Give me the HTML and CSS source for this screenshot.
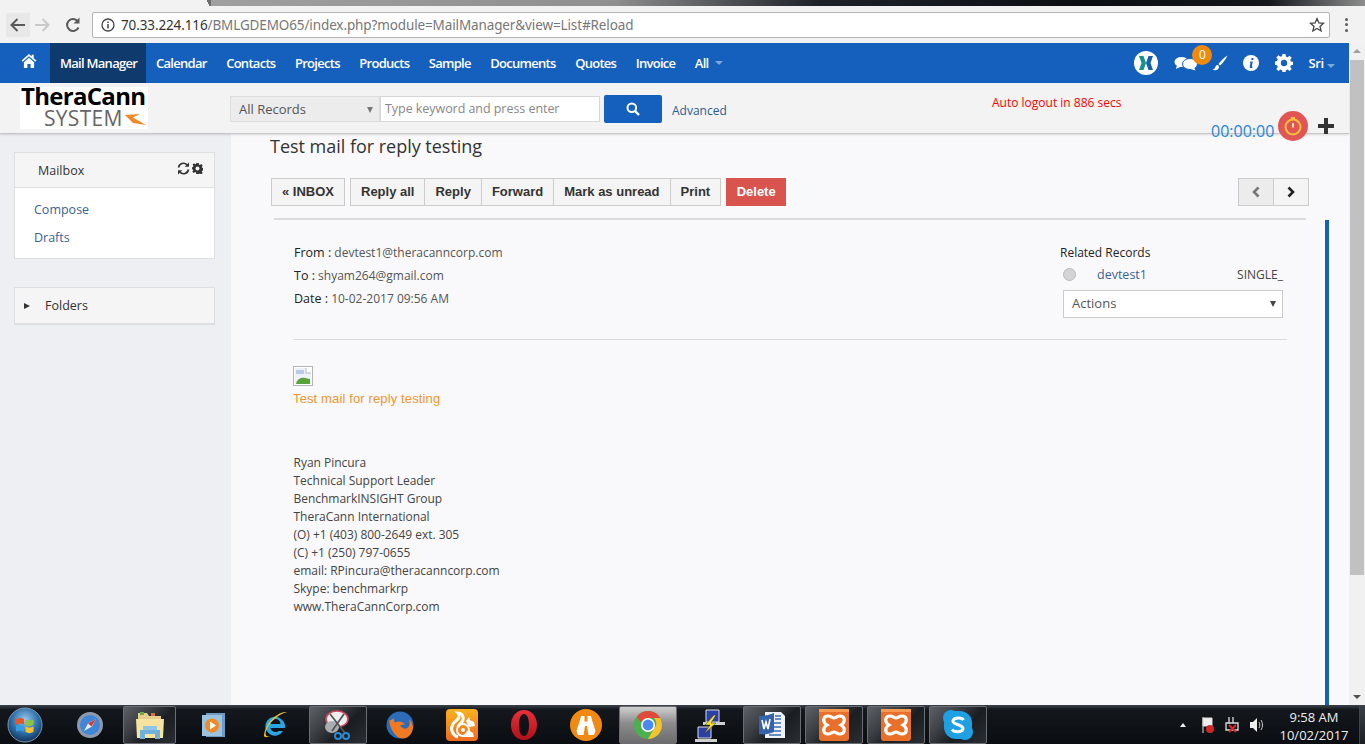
FILE: index.html
```html
<!DOCTYPE html>
<html lang="en">
<head>
<meta charset="utf-8">
<title>Mail Manager</title>
<link rel="stylesheet" href="styles.css">
</head>
<body>
<div class="screen">
  <div class="tabstrip"><div class="tab"></div><div class="tab-slant"></div></div>
  <div class="toolbar">
    <span class="tb-btn tb-back"><svg width="18" height="18" viewBox="0 0 18 18"><path d="M16 9H3M8.500 3 2.500 9l6 6" fill="none" stroke="#5a5a5a" stroke-width="2"/></svg></span>
    <span class="tb-btn"><svg width="18" height="18" viewBox="0 0 18 18"><path d="M2 9h13M9.500 3l6 6-6 6" fill="none" stroke="#c9c9c9" stroke-width="2"/></svg></span>
    <span class="tb-btn"><svg width="18" height="18" viewBox="0 0 18 18"><path d="M14.500 11.500A6 6 0 1 1 14 5.500" fill="none" stroke="#5a5a5a" stroke-width="2"/><path d="M15.500 1.500v6h-6z" fill="#5a5a5a"/></svg></span>
    <div class="omnibox">
      <svg class="omni-info" width="14" height="14" viewBox="0 0 14 14"><circle cx="7" cy="7" r="6" fill="none" stroke="#444" stroke-width="1.300"/><path d="M7 6v4.500M7 3.400v1.500" stroke="#444" stroke-width="1.500"/></svg>
      <span class="omni-host">70.33.224.116</span><span class="omni-path">/BMLGDEMO65/index.php?module=MailManager&amp;view=List#Reload</span>
      <svg class="omni-star" width="16" height="16" viewBox="0 0 16 16"><path d="m8 1.600 1.900 4.300 4.600.4-3.500 3.100 1.100 4.600L8 11.500 3.900 14 5 9.400 1.500 6.300l4.600-.4z" fill="none" stroke="#444" stroke-width="1.300"/></svg>
    </div>
    <span class="kebab"><i></i><i></i><i></i></span>
  </div>

  <div class="viewport">
    <div class="page">
      <nav class="nav">
        <a class="nav-home"><svg width="16" height="16" viewBox="0 0 16 16"><path d="M8 1 .6 7.600l1.100 1.200L8 3.300l6.300 5.500 1.100-1.200-2.700-2.400V1.800h-2v1.800z" fill="#fff"/><path d="M8 4.700 2.900 9.200V15h3.500v-4h3.200v4h3.500V9.200z" fill="#fff"/></svg></a>
        <a class="nav-item active">Mail Manager</a>
        <a class="nav-item">Calendar</a>
        <a class="nav-item">Contacts</a>
        <a class="nav-item">Projects</a>
        <a class="nav-item">Products</a>
        <a class="nav-item">Sample</a>
        <a class="nav-item">Documents</a>
        <a class="nav-item">Quotes</a>
        <a class="nav-item">Invoice</a>
        <a class="nav-item">All <span class="caret"></span></a>
        <div class="nav-right">
          <svg class="ni-x" width="24" height="24" viewBox="0 0 24 24"><circle cx="12" cy="12" r="12" fill="#fff"/><path d="M5 5h4.500L12 12l-2.500 7H5l2.500-7z" fill="#12948c"/><path d="M19 5h-4.500L12 12l2.500 7H19l-2.500-7z" fill="#155fb5"/></svg>
          <span class="ni-chat">
            <svg width="24" height="16" viewBox="0 0 24 16"><ellipse cx="7.500" cy="7" rx="7" ry="5" fill="#fff"/><path d="m3 10-1 4 5-2.500z" fill="#fff"/><ellipse cx="16" cy="9" rx="7.500" ry="5.500" fill="#fff" stroke="#1560bd"/><path d="m20 12.500 1.500 3-5-1.500z" fill="#fff"/></svg>
            <b class="badge">0</b>
          </span>
          <svg class="ni-brush" width="16" height="16" viewBox="0 0 16 16"><path d="M15.500 .5C12 2.500 8.500 6 6.500 9l1.500 1.500C10.500 8.500 14 4 15.500.5z" fill="#fff"/><path d="M5.500 10C3.500 10 3.500 12 3 13c-.3.800-1.500 1.300-2.500 1.300 2 1.500 6 1.200 6.500-2 .1-.8-.5-2.300-1.500-2.300z" fill="#fff"/></svg>
          <svg class="ni-info" width="16" height="16" viewBox="0 0 16 16"><circle cx="8" cy="8" r="8" fill="#fff"/><path d="M8.600 3h2l-.4 2h-2zM7.500 6.500h2.300L8.800 11.500c0 .4.500.3 1 0l-.2.900c-1.400.8-3.100.8-2.900-.7l.8-4.300-.9-.1z" fill="#1560bd"/></svg>
          <svg class="ni-gear" width="18" height="18" viewBox="0 0 18 18"><path d="M7.500 0h3l.4 2.500 1.600.7 2.100-1.500 2.100 2.100-1.500 2.100.7 1.600 2.500.4v3l-2.500.4-.7 1.600 1.500 2.100-2.100 2.100-2.100-1.500-1.600.7-.4 2.500h-3l-.4-2.500-1.600-.7-2.100 1.500-2.100-2.100 1.500-2.100-.7-1.600L-.4 10.500v-3l2.500-.4.700-1.600-1.500-2.100 2.100-2.100 2.100 1.500 1.600-.7z" fill="#fff"/><circle cx="9" cy="9" r="3.200" fill="#1560bd"/></svg>
          <span class="ni-user">Sri <span class="caret"></span></span>
        </div>
      </nav>

      <header class="subhead">
        <div class="logo">
          <span class="logo-top">TheraCann</span>
          <span class="logo-bottom">SYSTEM<svg width="23" height="12" viewBox="0 0 23 12"><path d="M2 1 17 0 10 3.500 23 11 10 9z" fill="#f08a24"/></svg></span>
        </div>
        <div class="search">
          <div class="search-select">All Records<span class="arrow-down"></span></div>
          <div class="search-input">Type keyword and press enter</div>
          <button class="search-btn"><svg width="14" height="14" viewBox="0 0 14 14"><circle cx="5.800" cy="5.800" r="4.300" fill="none" stroke="#fff" stroke-width="2"/><path d="m9 9 4 4" stroke="#fff" stroke-width="2.400"/></svg></button>
          <a class="advanced">Advanced</a>
        </div>
        <div class="autologout">Auto logout in 886 secs</div>
        <div class="timer">
          <span class="timer-text">00:00:00</span>
          <span class="timer-circle"><svg width="18" height="20" viewBox="0 0 18 20"><circle cx="9" cy="11" r="7.500" fill="none" stroke="#f6c03c" stroke-width="2"/><path d="M7 1h4v2H7z" fill="#f6c03c"/><path d="M9 7v4.500" stroke="#fbe3a0" stroke-width="2"/></svg></span>
          <svg class="timer-plus" width="18" height="18" viewBox="0 0 18 18"><path d="M7 1h4v6h6v4h-6v6H7v-6H1V7h6z" fill="#333"/></svg>
        </div>
      </header>

      <div class="content">
        <aside class="sidebar">
          <section class="panel">
            <div class="panel-head">Mailbox
              <span class="panel-tools">
                <svg width="13" height="13" viewBox="0 0 13 13"><path d="M1.500 5.500A5 5 0 0 1 10 2.800M11.500 7.500A5 5 0 0 1 3 10.200" fill="none" stroke="#333" stroke-width="1.700"/><path d="M12 .5v4.300H7.700zM1 12.500V8.200h4.300z" fill="#333"/></svg>
                <svg width="11" height="11" viewBox="0 0 18 18"><path d="M7 0h4l.4 2.500 1.600.7 2.100-1.500 2.400 2.400-1.500 2.100.7 1.600 2.300.4v4l-2.300.4-.7 1.600 1.500 2.100-2.400 2.400-2.100-1.500-1.600.7L11 18H7l-.4-2.500-1.600-.7-2.100 1.500-2.400-2.400 1.500-2.100-.7-1.600L-1 11V7l2.700-.4.700-1.600-1.500-2.100L3.300.5l2.100 1.500 1.600-.7z" fill="#333"/><circle cx="9" cy="9" r="3.200" fill="#f5f5f5"/></svg>
              </span>
            </div>
            <div class="panel-body">
              <a class="side-link">Compose</a>
              <a class="side-link">Drafts</a>
            </div>
          </section>
          <section class="panel panel-folders">
            <span class="tri-right"></span>Folders
          </section>
        </aside>

        <main class="main">
          <h1 class="mail-title">Test mail for reply testing</h1>
          <div class="actions">
            <button class="btn btn-inbox">« INBOX</button>
            <div class="btn-group">
              <button class="btn">Reply all</button><button class="btn">Reply</button><button class="btn">Forward</button><button class="btn">Mark as unread</button><button class="btn">Print</button>
            </div>
            <button class="btn btn-danger">Delete</button>
            <div class="btn-group pager">
              <button class="btn btn-page btn-disabled"><svg width="10" height="12" viewBox="0 0 10 12"><path d="M7.500 1.500 3 6l4.500 4.500" fill="none" stroke="#777" stroke-width="2.600"/></svg></button><button class="btn btn-page"><svg width="10" height="12" viewBox="0 0 10 12"><path d="M2.500 1.500 7 6l-4.500 4.500" fill="none" stroke="#222" stroke-width="2.600"/></svg></button>
            </div>
          </div>
          <div class="rule-top"></div>
          <div class="mail-wrap">
            <div class="mail">
              <div class="mail-head">
                <div class="meta">
                  <p><b>From :</b> devtest1@theracanncorp.com</p>
                  <p><b>To :</b> shyam264@gmail.com</p>
                  <p><b>Date :</b> 10-02-2017 09:56 AM</p>
                </div>
                <div class="related">
                  <div class="related-title">Related Records</div>
                  <div class="related-row"><span class="radio"></span><a class="related-name">devtest1</a><span class="related-type">SINGLE_</span></div>
                  <div class="related-select">Actions<span class="arrow-down dark"></span></div>
                </div>
              </div>
              <div class="mail-rule"></div>
              <div class="broken"><svg width="18" height="18" viewBox="0 0 18 18"><path d="M1 1h11l5 5v11H1z" fill="#eef2f8"/><path d="M12 1v5h5" fill="#fff" stroke="#bbb"/><path d="M2 17c1-5 5-7 9-6l5 1v5z" fill="#5aa23a"/><path d="M2 3h8v4H2z" fill="#b9cbe6"/></svg></div>
              <p class="mail-orange">Test mail for reply testing</p>
              <div class="signature">
                <div>Ryan Pincura</div>
                <div>Technical Support Leader</div>
                <div>BenchmarkINSIGHT Group</div>
                <div>TheraCann International</div>
                <div>(O) +1 (403) 800-2649 ext. 305</div>
                <div>(C) +1 (250) 797-0655</div>
                <div>email: RPincura@theracanncorp.com</div>
                <div>Skype: benchmarkrp</div>
                <div>www.TheraCannCorp.com</div>
              </div>
            </div>
            <div class="blue-bar"></div>
          </div>
        </main>
      </div>
    </div>
    <div class="scrollbar">
      <span class="sb-up"></span>
      <span class="sb-thumb"></span>
      <span class="sb-down"></span>
    </div>
  </div>

  <footer class="taskbar">
    <span class="tk-start"><svg width="36" height="36" viewBox="0 0 36 36"><defs><radialGradient id="orb" cx="50%" cy="35%" r="65%"><stop offset="0" stop-color="#9cc8ea"/><stop offset=".6" stop-color="#2c6ea8"/><stop offset="1" stop-color="#0f3358"/></radialGradient></defs><circle cx="18" cy="18" r="17" fill="url(#orb)" stroke="#7e98b0"/><path d="M9 12c3-1.500 5-1.500 8 0v5.500c-3-1.500-5-1.500-8 0z" fill="#e8552c"/><path d="M18.500 12.500c3 1.500 5 1.500 8 0V18c-3 1.500-5 1.500-8 0z" fill="#8cc43f"/><path d="M9 19c3-1.500 5-1.500 8 0v5.500c-3-1.500-5-1.500-8 0z" fill="#35a0e0"/><path d="M18.500 19.500c3 1.500 5 1.500 8 0V25c-3 1.500-5 1.500-8 0z" fill="#f6c030"/></svg></span>
    <span class="tk-item"><svg width="28" height="28" viewBox="0 0 28 28"><circle cx="14" cy="14" r="13" fill="#8e9aab"/><circle cx="14" cy="14" r="10" fill="#3f86d8"/><path d="m20 8-8 4.500L8 20l8-4.500z" fill="#eee"/><path d="m20 8-8 4.500 3.500 3z" fill="#d83a30"/></svg></span>
    <span class="tk-item tk-active tk-explorer"><svg width="32" height="30" viewBox="0 0 32 30"><path d="M4 3h9l2 3h12v5H4z" fill="#e6cf8c"/><path d="M6 2h4v3H6z" fill="#6fa84a"/><path d="M17 3h4v3h-4z" fill="#d6703c"/><path d="M2 9h28l-1 19H3z" fill="#f6e3a0"/><path d="M6 20h20v9h-5v-5H11v5H6z" fill="#6eb2dc"/><path d="M9 16h14v4H9z" fill="#8fc6e6"/></svg></span>
    <span class="tk-item"><svg width="26" height="28" viewBox="0 0 26 28"><path d="M5 2h19v24H5z" fill="#6f9cc4"/><path d="M1 4h20v21H1z" fill="#9dc2de"/><circle cx="11" cy="14.500" r="7" fill="#f08a24"/><path d="m9 10.500 6 4-6 4z" fill="#fff"/></svg></span>
    <span class="tk-item"><svg width="30" height="30" viewBox="0 0 30 30"><path d="M20 9a9.500 9.500 0 1 0 2 12h-4.500a5 5 0 0 1-8-3H24c.500-4-1-7-4-9zM9.500 14a5 5 0 0 1 10 0z" fill="#2aa6e2"/><path d="M26 2c-8-1-22 10-23 24 1 2 4 1 6 0C5 27 4 25 5 21 8 12 18 4 26 2z" fill="#f2c22e"/></svg></span>
    <span class="tk-item tk-active"><svg width="30" height="30" viewBox="0 0 30 30"><ellipse cx="14" cy="9" rx="11" ry="8" fill="#eee" stroke="#c84a5a" stroke-width="1.600"/><ellipse cx="9" cy="17" rx="7" ry="6" fill="#a9adb2"/><path d="m7 4 15 19M21 4 9 21" stroke="#555" stroke-width="1.800"/><circle cx="23" cy="26" r="3" fill="none" stroke="#2e8ad4" stroke-width="2"/><circle cx="15" cy="26" r="3" fill="none" stroke="#2e8ad4" stroke-width="2"/></svg></span>
    <span class="tk-item"><svg width="30" height="30" viewBox="0 0 30 30"><circle cx="15" cy="15" r="13.500" fill="#2d6cb8"/><path d="M4 9c1 10 6 19 14 19.500 6 0 10-6 10-12-1-5-3-6-4-7 2 5-1 9-3 9-3 1-5-2-6-3 2-1 5-1 5-1-2-3-6-4-10-2-1-1-1-2-1-4-3 1-4 3-5 1z" fill="#f07a22"/></svg></span>
    <span class="tk-item"><svg width="32" height="32" viewBox="0 0 32 32"><defs><linearGradient id="uc" x1="0" y1="0" x2="0" y2="1"><stop offset="0" stop-color="#f9b21e"/><stop offset="1" stop-color="#ee6a20"/></linearGradient></defs><rect width="32" height="32" rx="4" fill="url(#uc)"/><path d="M12 28C6 26 4 20 7 15c2-3 5-4 6-7 .5-2 0-3-1-4 4 0 6 3 5 7-1 3-4 4-5 7" fill="none" stroke="#fff" stroke-width="3"/><circle cx="17" cy="21" r="6" fill="none" stroke="#fff" stroke-width="2"/><circle cx="17" cy="21" r="2" fill="#fff"/><path d="M20 12l3-4 1 3 4 2 1 4-6 1c-1-2-2-4-3-6zM16 28h12l-1-4-5-3z" fill="#fff"/></svg></span>
    <span class="tk-item"><svg width="28" height="32" viewBox="0 0 28 32"><defs><linearGradient id="op" x1="0" y1="0" x2="0" y2="1"><stop offset="0" stop-color="#e8303a"/><stop offset="1" stop-color="#b01018"/></linearGradient></defs><path d="M14 1C6 1 1 8 1 16s5 15 13 15 13-7 13-15S22 1 14 1zm0 4c3.500 0 5 5 5 11s-1.500 11-5 11-5-5-5-11S10.500 5 14 5z" fill="url(#op)"/></svg></span>
    <span class="tk-item"><svg width="32" height="32" viewBox="0 0 32 32"><circle cx="16" cy="16" r="16" fill="#f08a14"/><path d="M11 7h3.500v5.500h3V7H21l1 4 3.500 11-1.500 4h-5.500L17 17h-2l-1.500 9H8l-1.500-4L10 11z" fill="#fff"/></svg></span>
    <span class="tk-item tk-active tk-light"><svg width="30" height="30" viewBox="0 0 30 30"><circle cx="15" cy="15" r="14" fill="#4caf50"/><path d="M15 1a14 14 0 0 1 12.100 7H15a7 7 0 0 0-6.500 4.500L3.700 7A14 14 0 0 1 15 1z" fill="#df4a3a"/><path d="M27.100 8A14 14 0 0 1 15 29l6-10.500A7 7 0 0 0 21 8z" fill="#f6c330"/><circle cx="15" cy="15" r="7" fill="#fff"/><circle cx="15" cy="15" r="5.400" fill="#4a8af0"/></svg></span>
    <span class="tk-item"><svg width="30" height="34" viewBox="0 0 30 34"><path d="M11 2h13v12H11z" fill="#2a3fa8" stroke="#ddd"/><path d="M3 19h13v11H3z" fill="#2a3fa8" stroke="#ddd"/><path d="M8 14h22v3H8zM0 31h22v3H0z" fill="#cfcfcf"/><path d="m19 7-9 10h5l-6 9 12-11h-5l5-8z" fill="#f6e02c" stroke="#333" stroke-width=".5"/></svg></span>
    <span class="tk-item tk-active"><svg width="30" height="30" viewBox="0 0 30 30"><path d="M8 2h16l4 4v22H8z" fill="#eef2f8"/><path d="M12 13h12M12 17h12M12 21h12M12 25h12M18 6h6M18 9h6" stroke="#3b6cb0" stroke-width="1.500"/><path d="M2 6c5 0 10-1 15-3v19C12 24 7 25 2 24z" fill="#3463ab"/><path d="m5 10 2 9 2-7 2 7 2-10" fill="none" stroke="#fff" stroke-width="1.600"/></svg></span>
    <span class="tk-item tk-active"><svg width="30" height="32" viewBox="0 0 30 32"><use href="#xampp-icon"/></svg></span>
    <span class="tk-item tk-active"><svg width="30" height="32" viewBox="0 0 30 32"><use href="#xampp-icon"/></svg></span>
    <span class="tk-item tk-active"><svg width="32" height="32" viewBox="0 0 32 32"><rect x="2" y="2" width="28" height="28" rx="12" fill="#1ea0e2"/><circle cx="9" cy="9" r="8" fill="#1ea0e2"/><circle cx="23" cy="23" r="8" fill="#1ea0e2"/><path d="M21.500 11C20 8.500 12.500 8 11 11.500 9.500 16 21.500 15 21 20c-1 3.500-9 3.500-11 .5" fill="none" stroke="#fff" stroke-width="3"/></svg></span>
    <div class="tray">
      <span class="tray-tri"></span>
      <svg width="14" height="18" viewBox="0 0 14 18"><path d="M2 1v16M2 2h9v8H2z" fill="#eee" stroke="#ddd"/><circle cx="9" cy="13" r="4" fill="#d0282a"/></svg>
      <svg width="16" height="18" viewBox="0 0 16 18"><path d="M5 1v6M9 1v6M2 7h12v7H2z" fill="none" stroke="#ddd" stroke-width="1.300"/><path d="m5 9 7 7m0-7-7 7" stroke="#d82a2a" stroke-width="2"/></svg>
      <svg width="16" height="16" viewBox="0 0 16 16"><path d="M1 5h3l4-4v14l-4-4H1z" fill="#eee"/><path d="M10 5c1 2 1 4 0 6M12 3c2 3 2 7 0 10" fill="none" stroke="#ccc"/></svg>
      <div class="clock"><div>9:58 AM</div><div>10/02/2017</div></div>
    </div>
    <span class="show-desktop"></span>
  </footer>
</div>
<svg class="defs" width="0" height="0"><defs><g id="xampp-icon"><rect x="0" y="0" width="30" height="32" rx="3" fill="#e8702a"/><rect x="0" y="0" width="30" height="3" fill="#f59a50"/><path d="M9 7c3 0 4 2 6 2s3-2 6-2c5 0 6 6 1 9 5 3 4 9-1 9-3 0-4-2-6-2s-3 2-6 2c-5 0-6-6-1-9C3 13 4 7 9 7z" fill="none" stroke="#fff" stroke-width="3.200"/></g></defs></svg>
</body>
</html>
```
FILE: styles.css
```css
* { box-sizing: border-box; }
html, body { margin: 0; padding: 0; height: 100%; overflow: hidden; }
body { font-family: "Open Sans", "Liberation Sans", sans-serif; font-size: 12px; color: #333; }
.defs { display: block; height: 0; }
.screen { width: 1365px; height: 744px; display: flex; flex-direction: column; overflow: hidden; }

/* browser chrome */
.tabstrip { height: 6px; flex: none; display: flex; background: linear-gradient(90deg, #a8a8a8 0, #8f8f8f 45%, #1d2229 60%, #0b0e13 80%, #14181d 93%, #8d8d8d 100%); }
.tab { width: 205px; background: #f2f2f2; }
.tab-slant { width: 6px; background: linear-gradient(65deg, #f2f2f2 50%, #6d6d6d 50%); }
.toolbar { height: 37px; flex: none; background: #f2f2f2; display: flex; align-items: center; padding-left: 6px; }
.tb-btn { width: 24px; height: 24px; display: flex; align-items: center; justify-content: center; }
.tb-back { background: #e8e8e8; }
.tb-btn:nth-child(3) { margin-left: 7px; margin-right: 7px; }
.omnibox { width: 1238px; height: 26px; background: #fff; border: 1px solid #b4b4b4; border-radius: 2px; display: flex; align-items: center; padding-left: 8px; font-family: "Noto Sans", "Open Sans", sans-serif; font-size: 13.500px; letter-spacing: -.12px; position: relative; }
.omni-info { margin-right: 6px; flex: none; }
.omni-host { color: #333; }
.omni-path { color: #777; }
.omni-star { margin-left: auto; margin-right: 4px; }
.kebab { margin-left: 15px; display: flex; flex-direction: column; gap: 2.500px; }
.kebab i { display: block; width: 3px; height: 3px; border-radius: 50%; background: #5c5c5c; }

.viewport { height: 662px; flex: none; display: flex; }
.page { width: 1349px; flex: none; display: flex; flex-direction: column; }

/* nav */
.nav { height: 40px; flex: none; background: #1560bd; display: flex; align-items: stretch; color: #fff; font-size: 13px; font-weight: 600; }
.nav-home { width: 50px; padding: 10px 0 0 21px; }
.nav-item { padding: 0 10px; display: flex; align-items: center; gap: 4px; white-space: nowrap; letter-spacing: -.72px; }
.nav-item.active { background: #0f3a6e; width: 96px; }
.nav-item + .nav-item:not(.active) { padding-right: 9.500px; }
.caret { display: inline-block; width: 0; height: 0; border: 4px solid transparent; border-top-color: #7fa6d8; border-bottom: 0; margin-left: 2px; }
.nav-right { margin-left: auto; display: flex; align-items: center; position: relative; padding-right: 14px; }
.ni-x { margin-right: 16px; }
.ni-chat { position: relative; display: flex; margin-right: 14px; }
.badge { position: absolute; left: 18px; top: -10px; width: 20px; height: 20px; border-radius: 50%; background: #f08a0c; color: #fff; font-size: 12px; font-weight: 400; line-height: 20px; text-align: center; }
.ni-brush { margin-right: 15px; }
.ni-info { margin-right: 16px; }
.ni-gear { margin-right: 15px; }
.ni-user { letter-spacing: -.3px; }
.ni-user .caret { margin-left: 0; }

/* sub header */
.subhead { height: 51px; flex: none; background: #f3f3f3; border-bottom: 1px solid #c6c6c6; box-shadow: 0 1px 2px rgba(0,0,0,.12); display: flex; position: relative; z-index: 2; }
.logo { width: 128px; height: 42px; margin: 4px 0 0 20px; background: #fff; display: flex; flex-direction: column; align-items: flex-start; flex: none; }
.logo-top { font-weight: 700; font-size: 24px; line-height: 18px; color: #000; letter-spacing: -.7px; padding-left: 1px; }
.logo-bottom { font-weight: 400; font-size: 21px; line-height: 26px; color: #666; display: flex; align-items: flex-end; letter-spacing: .3px; padding-left: 24px; }
.logo-bottom svg { margin-bottom: 5px; flex: none; }
.search { display: flex; align-items: center; height: 28px; margin: 12px 0 0 82px; }
.search-select { width: 150px; height: 26px; background: #ececec; border: 1px solid #ddd; color: #555; font-size: 13px; padding-left: 8px; line-height: 24px; position: relative; }
.arrow-down { position: absolute; right: 6px; top: 10px; width: 0; height: 0; border: 3.500px solid transparent; border-top: 6px solid #777; border-bottom: 0; }
.arrow-down.dark { border-top-color: #444; }
.search-input { width: 220px; height: 26px; background: #fff; border: 1px solid #d6d6d6; color: #888; font-size: 12.500px; padding-left: 4px; line-height: 23px; letter-spacing: -.05px; }
.search-btn { width: 58px; height: 28px; margin-left: 4px; background: #1560bd; border: 0; border-radius: 2px; display: flex; align-items: center; justify-content: center; padding: 0; }
.advanced { margin-left: 10px; color: #2c5c94; font-size: 12px; padding-top: 2px; }
.autologout { position: absolute; left: 992px; top: 11px; color: #f00; font-size: 12px; line-height: 17px; }
.timer { position: absolute; left: 1211px; top: 27px; display: flex; align-items: center; }
.timer-text { color: #2a84d8; font-size: 16px; line-height: 20px; padding-top: 11px; width: 67px; }
.timer-circle { width: 30px; height: 30px; border-radius: 50%; background: #e25555; display: flex; align-items: center; justify-content: center; }
.timer-plus { margin-left: 9px; }

/* content */
.content { flex: 1; display: flex; min-height: 0; }
.sidebar { width: 231px; flex: none; background: #eeeff2; padding: 18px 16px 0 14px; }
.panel { background: #fff; border: 1px solid #dedfe3; }
.panel-head { height: 35px; background: #f5f5f6; border-bottom: 1px solid #dedfe3; padding: 9px 0 0 23px; font-size: 12.500px; line-height: 18px; position: relative; }
.panel-tools { position: absolute; right: 11px; top: 9px; display: flex; gap: 2px; align-items: center; }
.panel-body { height: 70px; padding: 8px 0 0 19px; display: flex; flex-direction: column; }
.side-link { color: #3c6292; font-size: 12.500px; line-height: 28px; }
.panel-folders { height: 38px; margin-top: 28px; background: #f5f5f6; border-bottom: 2px solid #dedfe3; font-size: 12.500px; line-height: 37px; padding-left: 9px; display: flex; align-items: center; }
.tri-right { width: 0; height: 0; border: 3.500px solid transparent; border-left: 6px solid #333; border-right: 0; margin-right: 15px; }

.main { flex: 1; background: #f9f9fb; display: flex; flex-direction: column; min-width: 0; padding-left: 39px; }
.mail-title { margin: 0 0 2px; font-size: 18px; font-weight: 400; line-height: 24px; color: #333; letter-spacing: -.02px; }
.actions { display: flex; margin: 18px 0 0 1px; height: 28px; padding-right: 40px; }
.btn { height: 28px; background: #f4f4f4; border: 1px solid #ccc; font-family: "Liberation Sans", Arial, sans-serif; font-size: 13px; font-weight: 700; color: #333; padding: 0 10px; line-height: 26px; }
.btn-inbox { width: 74px; padding: 0; }
.btn-group { display: flex; margin-left: 5px; }
.btn-group .btn + .btn { margin-left: -1px; }
.btn-danger { margin-left: 5px; width: 60px; padding: 0; background: #d9534f; border-color: #d9534f; color: #fff; }
.pager { margin-left: auto; }
.btn-page { width: 36px; padding: 0; display: flex; align-items: center; justify-content: center; }
.btn-disabled { background: #ececec; }
.rule-top { height: 2px; margin: 12px 43px 0 4px; background: #dcdcdc; flex: none; }
.mail-wrap { flex: 1; display: flex; min-height: 0; }
.mail { width: 1055px; padding: 22px 0 0 23px; flex: none; }
.blue-bar { width: 4px; flex: none; background: #1560bd; }
.mail-head { display: flex; justify-content: space-between; height: 97px; width: 992px; }
.meta p { margin: 0 0 4px; line-height: 19px; font-size: 12px; color: #555; }
.meta b { font-weight: 400; color: #222; font-size: 12.500px; }
.meta { padding: 1px 0 0 1px; }
.related { width: 223px; margin-right: 2px; flex: none; }
.related-title { color: #222; line-height: 19px; padding-top: 1px; }
.related-row { display: flex; align-items: center; height: 24px; padding-left: 3px; }
.radio { width: 13px; height: 13px; border-radius: 50%; background: #d4d4d6; border: 1px solid #b8b8ba; }
.related-name { margin-left: 21px; color: #3c6292; font-size: 12.500px; }
.related-type { margin-left: auto; color: #444; }
.related-select { height: 28px; margin: 4px 0 0 3px; width: 220px; background: #fff; border: 1px solid #ccc; color: #555; font-size: 13px; line-height: 25px; padding-left: 8px; position: relative; }
.mail-rule { height: 1px; width: 994px; background: #dcdcdc; }
.broken { width: 20px; height: 20px; border: 1px solid #b4b4b4; margin-top: 26px; background: #fff; overflow: hidden; display: block; }
.broken svg { display: block; }
.mail-orange { margin: 3px 0 0; font-family: "Liberation Sans", Arial, sans-serif; font-size: 13px; line-height: 19px; color: #f0962e; letter-spacing: .13px; }
.signature { margin-top: 46px; font-size: 12px; line-height: 18px; color: #444; padding-left: .5px; letter-spacing: -.02px; }

/* scrollbar */
.scrollbar { width: 16px; flex: none; background: #f1f1f1; display: flex; flex-direction: column; align-items: center; }
.sb-up { margin-top: 6px; width: 0; height: 0; border: 4px solid transparent; border-bottom: 4px solid #a0a0a0; border-top: 0; }
.sb-thumb { width: 14px; height: 515px; margin-top: 7px; background: #c1c1c1; }
.sb-down { margin-top: auto; margin-bottom: 6px; width: 0; height: 0; border: 4px solid transparent; border-top: 4px solid #505050; border-bottom: 0; }

/* taskbar */
.taskbar { height: 39px; flex: none; background: linear-gradient(180deg, #3c434b 0, #14181c 12%, #0a0d11 100%); display: flex; align-items: center; gap: 4px; color: #eee; }
.tk-start { width: 57px; height: 39px; flex: none; display: flex; align-items: center; justify-content: center; padding-right: 8px; }
.tk-item { width: 58px; height: 38px; flex: none; display: flex; align-items: center; justify-content: center; margin-top: 1px; }
.tk-active { background: linear-gradient(135deg, #5c6167 0, #3a3e43 35%, #1a1d21 60%, #2a2d31 100%); border: 1px solid #6a6e73; border-radius: 2px; }
.tk-explorer { width: 53px; margin-right: 5px; }
.tk-light { background: linear-gradient(180deg, #cfcfcf 0, #8c8c8c 45%, #6c6c6c 100%); }
.tray { margin-left: 189px; display: flex; align-items: center; gap: 9px; }
.tray-tri { width: 0; height: 0; border: 3.500px solid transparent; border-bottom: 4px solid #eee; border-top: 0; margin-right: 6px; }
.clock { width: 82px; margin-left: -1px; padding-top: 2px; text-align: center; font-size: 13px; line-height: 18px; color: #eee; }
.show-desktop { width: 13px; height: 39px; margin-left: auto; border-left: 1px solid #444; background: linear-gradient(180deg, #3a4047, #1b1f24); }
```
